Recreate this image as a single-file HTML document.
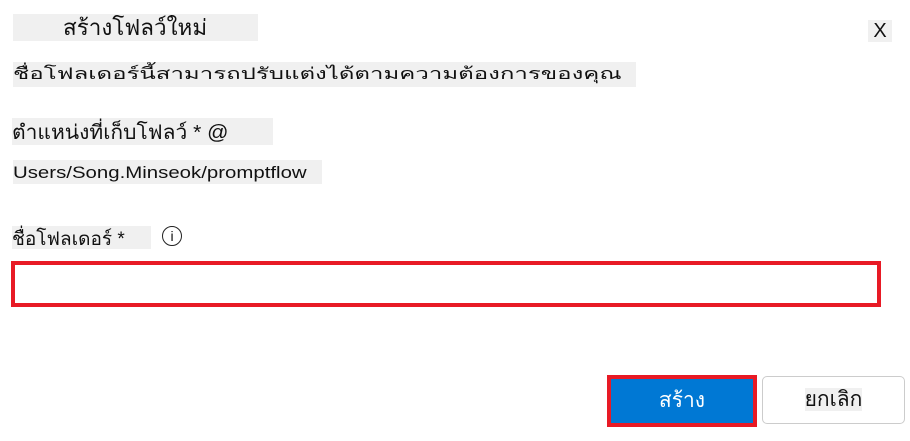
<html><head><style>
body{margin:0;width:910px;height:441px;background:#fff;position:relative;font-family:"Liberation Sans","Noto Sans CJK SC",sans-serif;color:#111;overflow:hidden}
.a{position:absolute;background:#f0f0f0;white-space:nowrap}
.s{display:inline-block;transform-origin:0 50%}
</style></head><body>
<div class="a" style="left:13px;top:14px;width:245px;height:27px;font-size:22px;line-height:27px;padding-left:50px;box-sizing:border-box"><span class="s" style="transform:scaleX(1.02)">สร้างโฟลว์ใหม่</span></div>
<div class="a" style="left:868px;top:20px;width:24px;height:22px;font-size:20px;line-height:22px;text-align:center">X</div>
<div class="a" style="left:13px;top:62px;width:623px;height:25px;font-size:16px;line-height:25px"><span class="s" style="transform:scaleX(1.5)">ชื่อโฟลเดอร์นี้สามารถปรับแต่งได้ตามความต้องการของคุณ</span></div>
<div class="a" style="left:12px;top:118px;width:261px;height:27px;font-size:20px;line-height:30px"><span class="s" style="transform:scaleX(1.05)">ตำแหน่งที่เก็บโฟลว์ * @</span></div>
<div class="a" style="left:13px;top:160px;width:309px;height:24px;font-size:17px;line-height:26px"><span class="s" style="transform:scaleX(1.2)">Users/Song.Minseok/promptflow</span></div>
<div class="a" style="left:12px;top:226px;width:139px;height:23px;font-size:19px;line-height:28px">ชื่อโฟลเดอร์ *</div>
<div style="position:absolute;left:162px;top:226px;width:18px;height:18px;border:1.5px solid #222;border-radius:50%;font-size:14px;line-height:18px;text-align:center">i</div>
<div style="position:absolute;left:11px;top:261px;width:870px;height:46px;border:4px solid #e81a25;box-sizing:border-box"></div>
<div style="position:absolute;left:607px;top:375px;width:150px;height:52px;border:4px solid #e81a25;background:#0078d4;box-sizing:border-box;color:#fff;font-size:21px;line-height:44px;text-align:center">สร้าง</div>
<div style="position:absolute;left:762px;top:376px;width:143px;height:48px;border:1px solid #ccc;border-radius:5px;box-sizing:border-box;font-size:21px;line-height:46px;text-align:center"><span style="background:#f0f0f0">ยกเลิก</span></div>
</body></html>
